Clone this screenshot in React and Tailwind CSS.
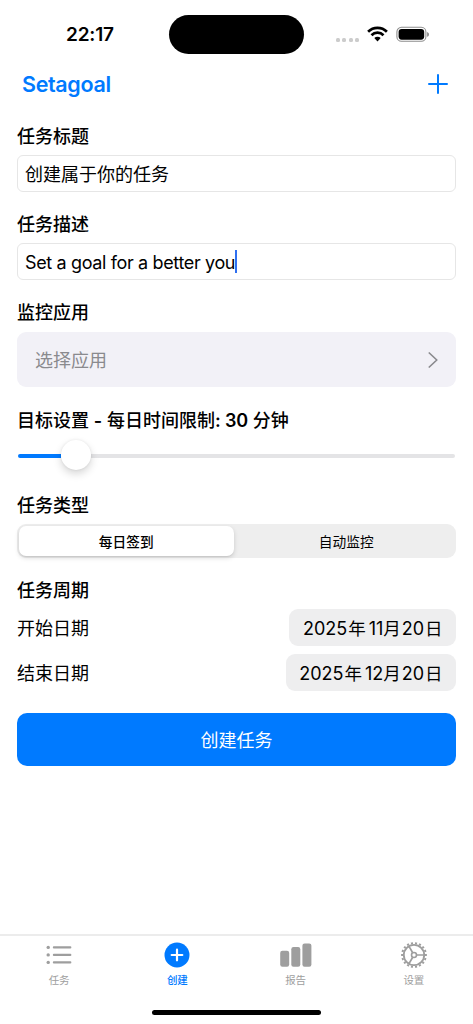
/**
 * Setagoal - create task screen
 */

const TABS = [
  { id: 'tasks', label: '任务', Icon: ListIcon },
  { id: 'create', label: '创建', Icon: PlusCircleIcon },
  { id: 'report', label: '报告', Icon: BarsIcon },
  { id: 'settings', label: '设置', Icon: GearIcon }
];

function ListIcon() {
  return (
    <svg width="26" height="26" viewBox="0 0 26 26" fill="currentColor">
      {[5.4, 12.9, 20.4].map((y) => (
        <g key={y}>
          <circle cx="2.2" cy={y} r="1.7" />
          <rect x="6.8" y={y - 1.1} width="18.6" height="2.2" rx="1.1" />
        </g>
      ))}
    </svg>
  );
}

function PlusCircleIcon() {
  return (
    <svg width="26" height="26" viewBox="0 0 26 26">
      <circle cx="13" cy="13" r="12.5" fill="currentColor" />
      <path d="M13 7.7v10.6M7.7 13h10.6" stroke="#fff" strokeWidth="2.2" strokeLinecap="round" />
    </svg>
  );
}

function BarsIcon() {
  return (
    <svg width="32" height="26" viewBox="0.6 0 32 26" fill="currentColor">
      <rect x="0.8" y="8.7" width="9" height="16" rx="2.2" />
      <rect x="11.9" y="5" width="9" height="19.7" rx="2.2" />
      <rect x="23" y="1.5" width="9" height="23.2" rx="2.2" />
    </svg>
  );
}

function GearIcon() {
  return (
    <svg width="26" height="26" viewBox="0 0 26 26" fill="none" stroke="currentColor">
      {/* 18 teeth around the rim */}
      <circle cx="13" cy="13" r="11.9" strokeWidth="2" pathLength="36" strokeDasharray="1 1" strokeDashoffset="0.5" />
      <circle cx="13" cy="13" r="10.2" strokeWidth="1.8" />
      <circle cx="13" cy="13" r="2.5" strokeWidth="1.6" />
      <path d="M15.6 13H23M11.7 10.8L8 4.4M11.7 15.2L8 21.6" strokeWidth="1.7" />
    </svg>
  );
}

function StatusBar() {
  return (
    <div className="relative flex h-[62px] items-start justify-between pt-[15px]">
      <span className="ml-[66px] mt-[8px] text-[19px] font-semibold leading-6 tracking-[-0.2px]">22:17</span>
      <div className="absolute left-[169px] top-[15px] h-[39px] w-[135px] rounded-full bg-black" />
      <div className="mr-[43px] mt-[11px] flex items-start">
        <div className="mr-[8px] mt-[12px] flex gap-[2.4px]">
          {[0, 1, 2, 3].map((i) => (
            <span key={i} className="h-[4px] w-[4px] rounded-[1.5px] bg-[#cccccc]" />
          ))}
        </div>
        <svg className="mr-[8px]" width="21" height="16" viewBox="0 0 21 16" fill="none" stroke="#000">
          <path d="M1.1 5.7a13.4 13.4 0 0 1 18.8 0" strokeWidth="2.7" />
          <path d="M4.5 9.2a8.5 8.5 0 0 1 12 0" strokeWidth="2.7" />
          <path d="M7.3 12.1a4.5 4.5 0 0 1 6.4 0L10.5 15.4Z" fill="#000" stroke="none" />
        </svg>
        <svg width="34" height="16" viewBox="0 0 34 16">
          <rect x="0.9" y="1.3" width="29" height="14" rx="4.6" fill="none" stroke="#000" strokeOpacity="0.45" strokeWidth="1.1" />
          <rect x="2.6" y="3" width="25.6" height="10.7" rx="3.1" fill="#000" />
          <path d="M31.2 6v4.8c1.1-.4 1.7-1.3 1.7-2.4s-.6-2-1.7-2.4Z" fill="#000" fillOpacity="0.5" />
        </svg>
      </div>
    </div>
  );
}

function SectionTitle({ children }) {
  return <h2 className="h-6 text-[18px] font-medium leading-[26px]">{children}</h2>;
}

function DateRow({ label, month, day }) {
  return (
    <div className="flex h-[37px] items-center justify-between">
      <span className="pt-[2px] text-[18px] leading-6">{label}</span>
      <span className="flex h-[37px] items-center rounded-[9px] bg-[#eeeeef] px-[13.5px] pt-[2px] text-[18px] leading-6">
        <span>2025</span>
        <span className="ml-px text-[17.5px]">年</span>
        <span className="ml-[3px] tracking-[-0.1px]">{month}</span>
        <span className="text-[17.5px]">月</span>
        <span className="ml-px">{day}</span>
        <span className="ml-px text-[17.5px]">日</span>
      </span>
    </div>
  );
}

function TabBar({ active }) {
  return (
    <nav className="flex h-[90px] shrink-0 flex-col justify-between border-t-2 border-[#ececec] bg-white">
      <div className="grid grid-cols-4 pt-[6px]">
        {TABS.map(({ id, label, Icon }) => (
          <div
            key={id}
            className={`flex flex-col items-center ${id === active ? 'font-medium text-[#007aff]' : 'text-[#9e9e9e]'}`}
          >
            <Icon />
            <span className="mt-[5px] text-[10.5px] leading-4">{label}</span>
          </div>
        ))}
      </div>
      <div className="mx-auto mb-[9px] h-[5px] w-[169px] rounded-full bg-black" />
    </nav>
  );
}

function App() {
  return (
    <div className="flex h-[1024px] w-[473px] flex-col overflow-hidden bg-white font-['Inter','Noto_Sans_CJK_SC',sans-serif] text-black">
      <StatusBar />

      <header className="flex h-[44px] items-center justify-between pl-[22px] pr-[25px]">
        <h1 className="text-[21.5px] font-semibold leading-7 tracking-[-0.35px] text-[#007aff]">Setagoal</h1>
        <svg width="20" height="20" viewBox="0 0 20 20" stroke="#007aff" strokeWidth="2" strokeLinecap="round">
          <path d="M10 1v18M1 10h18" />
        </svg>
      </header>

      <main className="flex flex-1 flex-col px-[17px] pt-[18px]">
        <SectionTitle>任务标题</SectionTitle>
        <div className="mt-[7px] flex h-[37px] items-center rounded-[6px] border border-[#e6e6e6] px-[7px] pt-[2px] text-[18px] leading-6">
          创建属于你的任务
        </div>

        <div className="mt-5">
          <SectionTitle>任务描述</SectionTitle>
        </div>
        <div className="mt-[7px] flex h-[37px] items-center rounded-[6px] border border-[#e6e6e6] px-[7px] text-[18px] leading-6">
          <span className="pt-[2px] tracking-[-0.36px]">Set a goal for a better you</span>
          <span className="h-[23px] w-[2px] bg-[#2f6ff0]" />
        </div>

        <div className="mt-5">
          <SectionTitle>监控应用</SectionTitle>
        </div>
        <div className="mt-[8px] flex h-[55px] items-center justify-between rounded-[9px] bg-[#f2f1f7] pl-[18px] pr-[18px]">
          <span className="pt-[2px] text-[18px] leading-6 text-[#8a8a8e]">选择应用</span>
          <svg width="10" height="16" viewBox="0 0 10 16" fill="none" stroke="#8a8a8e" strokeWidth="1.7" strokeLinecap="round" strokeLinejoin="round">
            <path d="M1.3 1L8.8 8L1.3 15" />
          </svg>
        </div>

        <div className="mt-[21px]">
          <SectionTitle>
            目标设置 <span className="font-semibold">-</span> 每日时间限制<span className="font-semibold tracking-[-0.2px]">: 30</span> 分钟
          </SectionTitle>
        </div>
        {/* Daily limit slider */}
        <div className="mx-px mt-[9px] flex h-[30px] items-center">
          <div className="h-[4px] w-[43px] rounded-l-full bg-[#007aff]" />
          <div className="relative -top-px z-10 h-[30px] w-[30px] rounded-full bg-white shadow-[0_4px_8px_rgba(0,0,0,0.16),0_0_3px_rgba(0,0,0,0.08)]" />
          <div className="h-[4px] flex-1 rounded-r-full bg-[#e4e4e6]" />
        </div>

        <div className="mt-[22px]">
          <SectionTitle>任务类型</SectionTitle>
        </div>
        <div className="mt-[7px] grid h-[34px] grid-cols-2 rounded-[9px] bg-[#eeeeee] text-[13.7px]">
          <div className="my-[2px] ml-[2px] mr-[3px] flex items-center justify-center rounded-[7px] bg-white pt-[2px] font-medium shadow-[0_2px_5px_rgba(0,0,0,0.14),0_1px_1px_rgba(0,0,0,0.06)]">
            每日签到
          </div>
          <div className="flex items-center justify-center pt-[2px]">自动监控</div>
        </div>

        <div className="mt-5">
          <SectionTitle>任务周期</SectionTitle>
        </div>
        <div className="mt-[7px] flex flex-col gap-2">
          <DateRow label="开始日期" month="11" day="20" />
          <DateRow label="结束日期" month="12" day="20" />
        </div>

        <button className="mt-[22px] h-[53px] shrink-0 rounded-[10px] bg-[#007aff] pt-[2px] text-[18px] text-white">
          创建任务
        </button>
      </main>

      <TabBar active="create" />
    </div>
  );
}

export default App;
